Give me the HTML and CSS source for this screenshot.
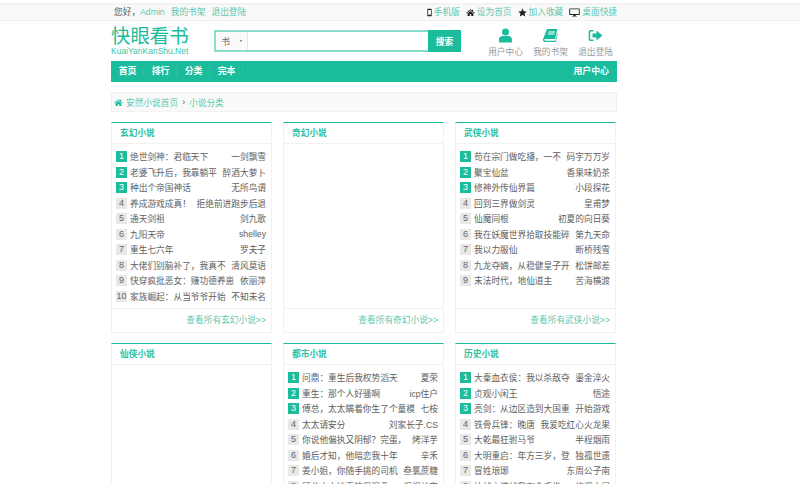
FILE: index.html
```html
<!DOCTYPE html>
<html lang="zh-CN">
<head>
  <meta charset="UTF-8">
  <title>小说分类</title>
  <link rel="stylesheet" href="styles.css">
</head>
<body>
  <div class="topbar">
    <div class="wrap topbar-inner">
      <div class="top-left">
        <span class="hello">您好，</span>
        <a href="#">Admin</a>
        <a href="#">我的书架</a>
        <a href="#">退出登陆</a>
      </div>
      <div class="top-right">
        <a href="#"><svg class="top-icon top-icon-phone" viewBox="2 0 6 10"><path d="M3 0.500h4a.6.6 0 0 1 .6.6v7.800a.6.6 0 0 1-.6.6H3a.6.6 0 0 1-.6-.6V1.100a.6.6 0 0 1 .6-.6zM3.300 2v5.700h3.400V2z"/></svg>手机版</a>
        <a href="#"><svg class="top-icon" viewBox="0 0 10 10"><path d="M5 1.500L0.300 5.400l.5.600L5 2.600 9.200 6l.5-.6L7.800 3.800V2H6.600v.8zM1.800 6v3h2.400V7h1.600v2h2.400V6L5 3.400z"/></svg>设为首页</a>
        <a href="#"><svg class="top-icon" viewBox="0 0 10 10"><path d="M5 .5l1.400 3 3.300.4-2.400 2.200.6 3.300L5 7.800 2.100 9.400l.6-3.300L.3 3.900l3.300-.4z"/></svg>加入收藏</a>
        <a href="#"><svg class="top-icon top-icon-wide" viewBox="0 0 12 10"><path d="M.8.5h10.400a.6.600 0 0 1 .6.6v6.200a.6.600 0 0 1-.6.6H7.400v1h1.200v.6H3.400v-.6h1.200v-1H.8a.6.600 0 0 1-.6-.6V1.100a.6.600 0 0 1 .6-.6zM1.200 1.500v5.300h9.600V1.500z"/></svg>桌面快捷</a>
      </div>
    </div>
  </div>

  <div class="wrap header">
    <div class="logo">
      <div class="logo-title">快眼看书</div>
      <div class="logo-sub">KuaiYanKanShu.Net</div>
    </div>
    <div class="search">
      <div class="search-type">书<span class="caret"></span></div>
      <div class="search-input"></div>
      <div class="search-btn">搜索</div>
    </div>
    <div class="user-links">
      <a href="#">
        <svg viewBox="0 0 14 14"><circle cx="7" cy="3.700" r="3.300"/><path d="M1 13.500V10.500C1 8.500 2.800 7.500 4.500 7.500h5c1.700 0 3.500 1 3.500 3v3z"/></svg>
        用户中心
      </a>
      <a href="#">
        <svg viewBox="0 0 15 14"><path d="M4 .5h10.500l-2.500 10H2.200C1.600 10.500 1.300 11 1.400 11.500s.5.800 1 .8h10l1.800-7.500.6.300-2 8.400H2.200C1 13.500 0 12.600 0 11.400c0-.3 0-.5.100-.8z"/><path d="M5.500 3h6.500l-.2 1H5.300zM5 5h6.500l-.2 1H4.800z" fill="#fff"/></svg>
        我的书架
      </a>
      <a href="#">
        <svg viewBox="0 0 15 14"><path d="M5.500 1.500H2.500C1.400 1.500.7 2.300.7 3.300v7.400c0 1 .7 1.800 1.800 1.800h3v-1.600h-3c-.2 0-.3-.1-.3-.3V3.400c0-.2.100-.3.300-.3h3z"/><path d="M8.500 2L14.500 7l-6 5V9H4.500V5h4z"/></svg>
        退出登陆
      </a>
    </div>
  </div>

  <div class="wrap nav">
    <a href="#">首页</a>
    <a href="#">排行</a>
    <a href="#">分类</a>
    <a href="#">完本</a>
    <a href="#" class="nav-user">用户中心</a>
  </div>

  <div class="wrap crumb">
    <svg class="crumb-home" viewBox="0 0 10 10"><path d="M5 1.500L0.300 5.400l.5.600L5 2.600 9.200 6l.5-.6L7.800 3.800V2H6.600v.8zM1.800 6v3h2.400V7h1.600v2h2.400V6L5 3.400z"/></svg>
    <a href="#">安然小说首页</a>
    <span class="crumb-sep">›</span>
    <a href="#">小说分类</a>
  </div>

  <div class="wrap cards">
    <div class="card">
      <div class="card-title">玄幻小说</div>
      <ul class="rank">
        <li><span class="num top">1</span><span class="name">绝世剑神：君临天下</span><span class="author">一剑飘雪</span></li>
        <li><span class="num top">2</span><span class="name">老婆飞升后，我靠躺平</span><span class="author">醉酒大萝卜</span></li>
        <li><span class="num top">3</span><span class="name">种出个帝国神话</span><span class="author">无所鸟谓</span></li>
        <li><span class="num">4</span><span class="name">养成游戏成真！</span><span class="author">拒绝前进跑步后退</span></li>
        <li><span class="num">5</span><span class="name">通天剑祖</span><span class="author">剑九歌</span></li>
        <li><span class="num">6</span><span class="name">九阳天帝</span><span class="author">shelley</span></li>
        <li><span class="num">7</span><span class="name">重生七六年</span><span class="author">罗夫子</span></li>
        <li><span class="num">8</span><span class="name">大佬们别脑补了，我真不</span><span class="author">清风莫语</span></li>
        <li><span class="num">9</span><span class="name">快穿疯批恶女：赚功德养崽</span><span class="author">依丽萍</span></li>
        <li><span class="num">10</span><span class="name">家族崛起：从当爷爷开始</span><span class="author">不知未名</span></li>
      </ul>
      <a href="#" class="card-more">查看所有玄幻小说&gt;&gt;</a>
    </div>

    <div class="card">
      <div class="card-title">奇幻小说</div>
      <ul class="rank"></ul>
      <a href="#" class="card-more">查看所有奇幻小说&gt;&gt;</a>
    </div>

    <div class="card">
      <div class="card-title">武侠小说</div>
      <ul class="rank">
        <li><span class="num top">1</span><span class="name">苟在宗门做吃播，一不</span><span class="author">码字万万岁</span></li>
        <li><span class="num top">2</span><span class="name">聚宝仙盆</span><span class="author">香果味奶茶</span></li>
        <li><span class="num top">3</span><span class="name">修神外传仙界篇</span><span class="author">小段探花</span></li>
        <li><span class="num">4</span><span class="name">回到三界做剑灵</span><span class="author">皇甫梦</span></li>
        <li><span class="num">5</span><span class="name">仙魔同根</span><span class="author">初夏的向日葵</span></li>
        <li><span class="num">6</span><span class="name">我在妖魔世界拾取技能碎</span><span class="author">第九天命</span></li>
        <li><span class="num">7</span><span class="name">我以力服仙</span><span class="author">断桥残雪</span></li>
        <li><span class="num">8</span><span class="name">九龙夺嫡，从稳健皇子开</span><span class="author">松饼邮差</span></li>
        <li><span class="num">9</span><span class="name">末法时代，地仙道主</span><span class="author">苦海横渡</span></li>
      </ul>
      <a href="#" class="card-more">查看所有武侠小说&gt;&gt;</a>
    </div>

    <div class="card">
      <div class="card-title">仙侠小说</div>
      <ul class="rank"></ul>
    </div>

    <div class="card">
      <div class="card-title">都市小说</div>
      <ul class="rank">
        <li><span class="num top">1</span><span class="name">问鼎：重生后我权势滔天</span><span class="author">夏荣</span></li>
        <li><span class="num top">2</span><span class="name">重生：那个人好骚啊</span><span class="author">icp住户</span></li>
        <li><span class="num top">3</span><span class="name">傅总，太太瞒着你生了个童模</span><span class="author">七桉</span></li>
        <li><span class="num">4</span><span class="name">太太请安分</span><span class="author">刘家长子.CS</span></li>
        <li><span class="num">5</span><span class="name">你说他偏执又阴郁？完蛋，</span><span class="author">烤洋芋</span></li>
        <li><span class="num">6</span><span class="name">婚后才知，他暗恋我十年</span><span class="author">辛禾</span></li>
        <li><span class="num">7</span><span class="name">姜小姐，你随手挑的司机</span><span class="author">叁氯蔗糖</span></li>
        <li><span class="num">8</span><span class="name">顾总太太她真的很温柔</span><span class="author">煜煜站宫</span></li>
      </ul>
    </div>

    <div class="card">
      <div class="card-title">历史小说</div>
      <ul class="rank">
        <li><span class="num top">1</span><span class="name">大秦血衣侯：我以杀敌夺</span><span class="author">鎏金淬火</span></li>
        <li><span class="num top">2</span><span class="name">贞观小闲王</span><span class="author">悟途</span></li>
        <li><span class="num top">3</span><span class="name">亮剑：从边区造到大国重</span><span class="author">开始游戏</span></li>
        <li><span class="num">4</span><span class="name">铁骨兵锋：晚唐</span><span class="author">我爱吃红心火龙果</span></li>
        <li><span class="num">5</span><span class="name">大乾最狂驸马爷</span><span class="author">半程烟雨</span></li>
        <li><span class="num">6</span><span class="name">大明重启：年方三岁，登</span><span class="author">独孤世遗</span></li>
        <li><span class="num">7</span><span class="name">冒姓琅琊</span><span class="author">东周公子南</span></li>
        <li><span class="num">8</span><span class="name">抗战之谍战我有金手指</span><span class="author">炊烟人间</span></li>
      </ul>
    </div>
  </div>
</body>
</html>
```

FILE: styles.css
```css
html, body {
  height: 484px;
  overflow: hidden;
}

body {
  margin: 0;
  background: #fff;
  color: #5e5e5e;
  font-family: "Liberation Sans", "Noto Sans CJK SC", sans-serif;
  font-size: 8.7px;
}

a {
  color: #1abc9c;
  text-decoration: none;
}

.wrap {
  width: 506px;
  margin-left: 111px;
}

/* top bar */
.topbar {
  margin-top: 3px;
  height: 18px;
  background: #f9f9f9;
  border-top: 2px solid #f2f2f2;
  border-bottom: 1px solid #eee;
  box-sizing: border-box;
}

.topbar-inner {
  display: flex;
  justify-content: space-between;
  align-items: center;
  height: 15px;
}

.top-left {
  display: flex;
  align-items: center;
  gap: 6px;
  margin-left: 3px;
  line-height: 15px;
}

.top-left a,
.top-right a {
  color: #5cc8b0;
}

.hello {
  color: #555;
  margin-right: -6px;
}

.top-right {
  display: flex;
  gap: 6px;
}

.top-right a {
  display: flex;
  align-items: center;
  line-height: 15px;
}

.top-icon {
  width: 9px;
  height: 9px;
  margin-right: 2px;
  fill: #222;
}

.top-icon-phone {
  width: 5px;
}

.top-icon-wide {
  width: 11px;
}

/* header */
.header {
  display: flex;
  height: 40px;
}

.logo {
  width: 103px;
  color: #1abc9c;
}

.logo-title {
  font-size: 19.4px;
  line-height: 20px;
  margin-top: 5px;
}

.logo-sub {
  font-size: 8.5px;
  line-height: 10px;
  color: #3cc4a8;
}

.search {
  display: flex;
  width: 247px;
  height: 22px;
  margin-top: 9px;
  box-sizing: border-box;
  border: 2px solid #8cdccb;
  border-right: 0;
}

.search-type {
  width: 31px;
  display: flex;
  align-items: center;
  justify-content: center;
  gap: 10px;
  border-right: 1px solid #e5e5e5;
  color: #666;
  background: #fafafa;
}

.caret {
  width: 0;
  height: 0;
  border-left: 1.5px solid transparent;
  border-right: 1.5px solid transparent;
  border-top: 2px solid #666;
}

.search-input {
  flex: 1;
}

.search-btn {
  width: 33px;
  margin: -2px 0;
  background: #1abc9c;
  color: #fff;
  display: flex;
  align-items: center;
  justify-content: center;
  font-weight: bold;
}

.user-links {
  display: flex;
  margin-left: 27px;
  gap: 10px;
}

.user-links a {
  width: 35px;
  display: flex;
  flex-direction: column;
  align-items: center;
  color: #999;
  white-space: nowrap;
  padding-top: 7px;
}

.user-links svg {
  width: 15px;
  height: 15px;
  fill: #1abc9c;
  margin-bottom: 2px;
}

/* nav */
.nav {
  display: flex;
  height: 21px;
  background: #1abc9c;
  align-items: center;
}

.nav a {
  width: 33px;
  padding-left: 1px;
  text-align: center;
  color: #fff;
  font-weight: bold;
  font-size: 8.9px;
  box-sizing: border-box;
  border-right: 1px solid #2fc3a5;
  line-height: 9px;
}

.nav a.nav-user {
  width: auto;
  margin-left: auto;
  margin-right: 8px;
  border: 0;
}

/* breadcrumb */
.crumb {
  display: flex;
  align-items: center;
  height: 20px;
  margin-top: 10px;
  box-sizing: border-box;
  padding-left: 2px;
  background: #f9f9f9;
  border: 1px solid #f2f2f2;
  color: #777;
}

.crumb a {
  color: #5cc8b0;
}

.crumb-home {
  width: 9px;
  height: 9px;
  fill: #1abc9c;
  margin-right: 3px;
}

.crumb-sep {
  margin: 0 4px;
  color: #555;
}

/* cards */
.cards {
  display: grid;
  grid-template-columns: repeat(3, 161px);
  column-gap: 11px;
  row-gap: 10px;
  margin-top: 10px;
}

.card {
  height: 211px;
  box-sizing: border-box;
  border: 1px solid #f2f2f2;
  border-top: 1px solid #1abc9c;
  display: flex;
  flex-direction: column;
}

.card-title {
  height: 20px;
  line-height: 20px;
  padding-left: 8px;
  color: #2cc0a2;
  font-weight: bold;
  border-bottom: 1px solid #f2f2f2;
}

.rank {
  list-style: none;
  margin: 5px 0 0;
  padding: 0 5px 0 4px;
  flex: 1;
}

.rank li {
  display: flex;
  align-items: center;
  height: 15.5px;
}

.num {
  width: 11px;
  height: 11px;
  flex: none;
  margin-right: 3px;
  background: #e8e8e8;
  color: #666;
  text-align: center;
  line-height: 11px;
  font-size: 9px;
}

.num.top {
  background: #1abc9c;
  color: #fff;
}

.name {
  flex: 1;
  min-width: 0;
  overflow: hidden;
  white-space: nowrap;
}

.author {
  flex: none;
  margin-left: 3px;
  white-space: nowrap;
}

.card-more {
  display: block;
  height: 23px;
  line-height: 23px;
  text-align: right;
  padding-right: 5px;
  border-top: 1px solid #f2f2f2;
  color: #5cc8b0;
}
```
